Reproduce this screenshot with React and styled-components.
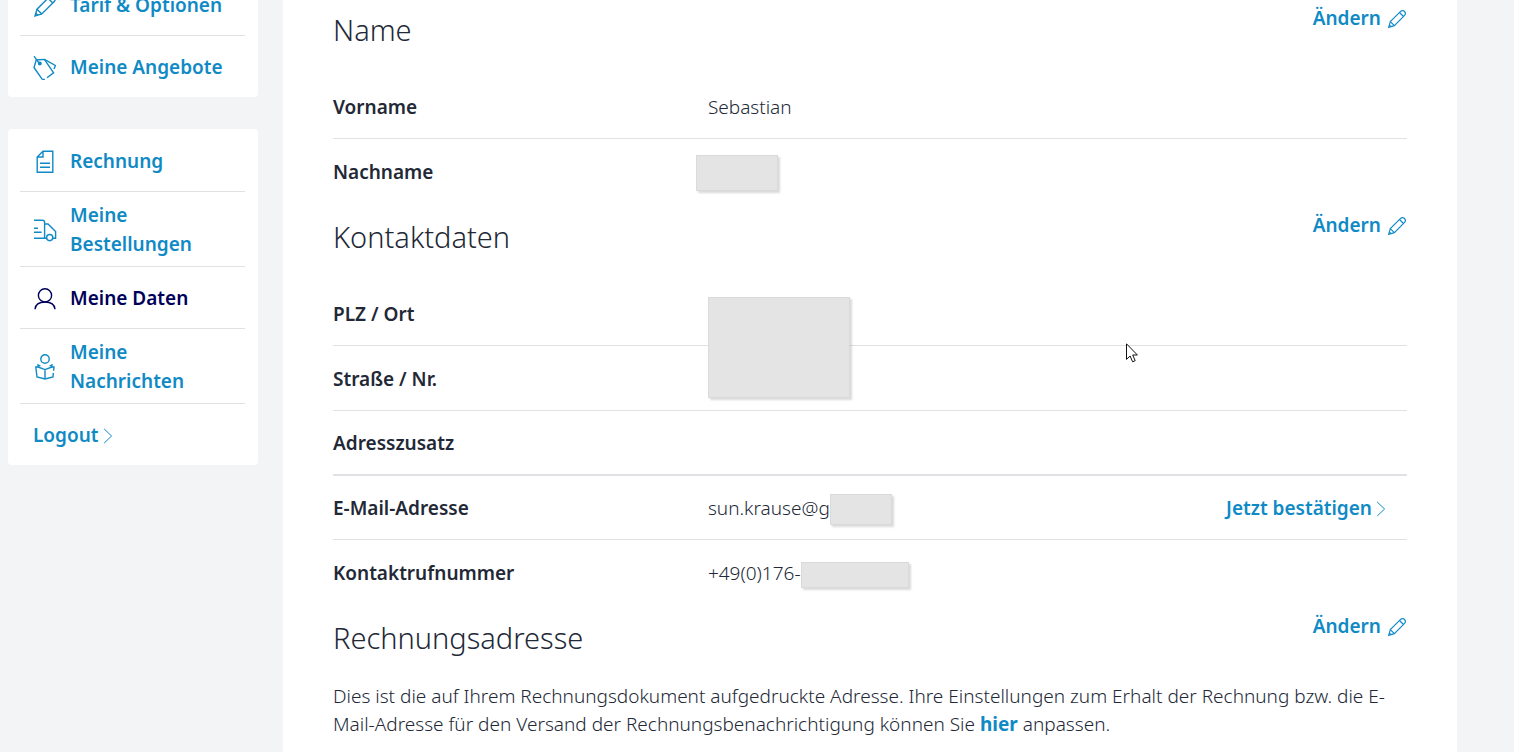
import React from "react";
import styled, { createGlobalStyle } from "styled-components";

const GlobalStyle = createGlobalStyle`
	* {
		box-sizing: border-box;
	}
	body {
		margin: 0;
		background: #f3f4f6;
		color: #222836;
		font-family: "Noto Sans", "Open Sans", sans-serif;
		font-size: 19px;
		font-weight: 300;
		line-height: 29px;
	}
	dl, dt, dd, h2, p, ul {
		margin: 0;
		padding: 0;
	}
`;

const PencilIcon = ({ size = 20 }) => (
	<Icon viewBox="0 0 24 24" width={size} height={size} aria-hidden="true">
		<path d="M2 22 L4 15.2 L16 3.2 C17.6 1.6 19.6 1.6 21 3 C22.4 4.4 22.4 6.4 20.8 8 L8.8 20 Z" />
		<path d="M4 15.2 L8.8 20 M15 4.2 L19.8 9 M2.8 19.2 L4.8 21.2" />
	</Icon>
);

const TagIcon = () => (
	<Icon viewBox="0 0 24 24" width="24" height="24" aria-hidden="true">
		<path d="M1 .2 L6 7" />
		<circle cx="6.8" cy="7.6" r="1.3" fill="currentColor" />
		<path d="M9.6 23.8 L1 11.5 L3.2 4 L11.4 3.4 L20.6 16.8 L14 21.8" />
		<path d="M9.6 23.8 L11.8 23.2 M11.4 3.4 L22.4 9.5 L21 13" />
	</Icon>
);

const BillIcon = () => (
	<Icon viewBox="0 0 24 24" width="24" height="24" aria-hidden="true">
		<path d="M10 1.2 H19.8 V22.2 H4.2 V7 Z M10 1.2 V7 H4.2" />
		<path d="M7 13.3 H17 M7 17.3 H17" />
	</Icon>
);

const TruckIcon = () => (
	<Icon viewBox="0 0 24 24" width="24" height="24" aria-hidden="true">
		<path d="M1 2.2 H9.5 Q11.6 2.2 11.6 4.3 V20.2 H1 M11.6 20.2 H13.3" />
		<path d="M11.6 6 H15 L22.6 13.5 V20.2 H20" />
		<path d="M1 10.2 H5 M1 14.2 H8.6" />
		<circle cx="16.7" cy="19.6" r="3.1" />
	</Icon>
);

const PersonIcon = () => (
	<Icon viewBox="0 0 24 24" width="24" height="24" aria-hidden="true">
		<circle cx="12" cy="8.4" r="6.6" />
		<path d="M2 22.2 C2.4 17.6 6.4 15 12 15 C17.6 15 21.6 17.6 22 22.2" />
	</Icon>
);

const ReaderIcon = () => (
	<Icon viewBox="0 0 24 26" width="24" height="26" aria-hidden="true">
		<circle cx="12" cy="5" r="4.2" />
		<path d="M7.4 12.2 L5 11 L5 13 L2.8 13 L4 23 L12 25 L20 23 L20.3 19 M20.6 16.8 L21 13 L19 13 L19 11 L16.6 12.2" />
		<path d="M12 25 V15.6 M5 13 L12 15.6 L19 13" />
	</Icon>
);

const ChevronIcon = () => (
	<Chevron viewBox="0 0 10 16" width="10" height="16" aria-hidden="true">
		<path d="M1.2 1 L8.6 8 L1.2 15" />
	</Chevron>
);

const Cursor = () => (
	<Pointer viewBox="0 0 12 20" width="12" height="20" aria-hidden="true">
		<path d="M.5 .8 V16.4 L4.1 13 L6.6 18.8 L9.2 17.7 L6.7 12 H11.4 Z" />
	</Pointer>
);

function NavItem({ icon, active, children }) {
	return (
		<NavRow>
			<NavLink href="#" $active={active} aria-current={active ? "page" : undefined}>
				{icon}
				<span>{children}</span>
			</NavLink>
		</NavRow>
	);
}

function SectionHead({ title }) {
	return (
		<SectionHeader>
			<Title>{title}</Title>
			<ActionLink href="#">
				Ändern <PencilIcon />
			</ActionLink>
		</SectionHeader>
	);
}

function App() {
	return (
		<Page>
			<GlobalStyle />
			<Layout>
				<Sidebar aria-label="Mein Konto">
					<Card>
						<NavItem icon={<PencilIcon size={24} />}>Tarif & Optionen</NavItem>
						<NavItem icon={<TagIcon />}>Meine Angebote</NavItem>
					</Card>
					<Card>
						<NavItem icon={<BillIcon />}>Rechnung</NavItem>
						<NavItem icon={<TruckIcon />}>Meine Bestellungen</NavItem>
						<NavItem icon={<PersonIcon />} active>
							Meine Daten
						</NavItem>
						<NavItem icon={<ReaderIcon />}>Meine Nachrichten</NavItem>
						<NavRow>
							<NavLink href="#" $tight>
								Logout <ChevronIcon />
							</NavLink>
						</NavRow>
					</Card>
				</Sidebar>

				<Panel>
					<section>
						<SectionHead title="Name" />
						<dl>
							<Row>
								<Label>Vorname</Label>
								<Value>Sebastian</Value>
							</Row>
							<Row>
								<Label>Nachname</Label>
								<Value>
									<FloatingMask $left={-12} $width={82} $height={36} />
								</Value>
							</Row>
						</dl>
					</section>

					<section>
						<SectionHead title="Kontaktdaten" />
						<dl>
							<Row>
								<Label>PLZ / Ort</Label>
								<Value>
									<FloatingMask $left={0} $width={142} $height={101} />
								</Value>
							</Row>
							<Row>
								<Label>Straße / Nr.</Label>
								<Value />
							</Row>
							<Row $strong>
								<Label>Adresszusatz</Label>
								<Value />
							</Row>
							<Row $compact>
								<Label>E-Mail-Adresse</Label>
								<Value>
									sun.krause@g
									<Mask $width={62} $height={31} />
									<Confirm href="#">
										Jetzt bestätigen <ChevronIcon />
									</Confirm>
								</Value>
							</Row>
							<Row>
								<Label>Kontaktrufnummer</Label>
								<Value>
									+49(0)176-
									<Mask $width={108} $height={26} />
								</Value>
							</Row>
						</dl>
					</section>

					<section>
						<SectionHead title="Rechnungsadresse" />
						<Text>
							Dies ist die auf Ihrem Rechnungsdokument aufgedruckte Adresse. Ihre Einstellungen zum
							Erhalt der Rechnung bzw. die E-Mail-Adresse für den Versand der
							Rechnungsbenachrichtigung können Sie <TextLink href="#">hier</TextLink> anpassen.
						</Text>
					</section>
				</Panel>
			</Layout>
			<Cursor />
		</Page>
	);
}

const Page = styled.div`
	position: relative;
	height: 100vh;
	overflow: hidden;
`;

const Layout = styled.div`
	display: flex;
	gap: 25px;
	margin-top: -27px;
	padding: 0 57px 0 8px;
`;

const Sidebar = styled.nav`
	flex: 0 0 250px;
`;

const Card = styled.ul`
	list-style: none;
	background: #fff;
	border-radius: 4px;
	padding: 1px 13px 0 12px;

	& + & {
		margin-top: 32px;
	}
`;

const NavRow = styled.li`
	& + & {
		border-top: 1px solid #dfe1e4;
	}
`;

const NavLink = styled.a`
	display: flex;
	align-items: center;
	gap: ${(props) => (props.$tight ? "4px" : "13px")};
	min-height: 61px;
	padding: 9px 12px 7px 13px;
	color: ${(props) => (props.$active ? "#00005a" : "#108ac5")};
	font-weight: 600;
	text-decoration: none;
`;

const Icon = styled.svg`
	flex: none;
	fill: none;
	stroke: currentColor;
	stroke-width: 1.4;
`;

const Chevron = styled(Icon)`
	stroke-width: 1;
`;

const Panel = styled.main`
	flex: 1;
	min-width: 0;
	background: #fff;
	padding: 24px 50px 40px;
`;

const SectionHeader = styled.header`
	display: flex;
	justify-content: space-between;
	align-items: flex-start;
	height: 77px;
	padding-top: 7px;
`;

const Title = styled.h2`
	font-size: 29px;
	font-weight: 300;
	line-height: 52px;
`;

const ActionLink = styled.a`
	display: flex;
	align-items: center;
	gap: 6px;
	color: #108ac5;
	font-weight: 600;
	text-decoration: none;
`;

const Row = styled.div`
	display: grid;
	grid-template-columns: calc(35% - 1px) 1fr;
	height: ${(props) => (props.$compact ? "64px" : "65px")};
	padding-top: 2px;
	border-bottom: ${(props) => (props.$strong ? "2px" : "1px")} solid #dfe1e4;

	&:last-child {
		border-bottom: 0;
	}
`;

const Label = styled.dt`
	align-self: center;
	font-weight: 600;
`;

const Value = styled.dd`
	position: relative;
	display: flex;
	align-items: center;
`;

const Mask = styled.span`
	width: ${(props) => props.$width}px;
	height: ${(props) => props.$height}px;
	margin-top: 2px;
	background: #e4e4e4;
	border: 1px solid #dadada;
	box-shadow: 2px 2px 2px rgba(0, 0, 0, 0.15);
`;

const FloatingMask = styled(Mask)`
	position: absolute;
	z-index: 1;
	top: 12px;
	left: ${(props) => props.$left}px;
`;

const Confirm = styled(ActionLink)`
	gap: 4px;
	margin-left: auto;
	padding-right: 21px;
`;

const Text = styled.p`
	line-height: 28px;
`;

const TextLink = styled.a`
	color: #108ac5;
	font-weight: 700;
	text-decoration: none;
`;

const Pointer = styled.svg`
	position: absolute;
	top: 343px;
	left: 1126px;
	fill: #fff;
	stroke: #111;
	stroke-width: 1;
`;

export default App;
